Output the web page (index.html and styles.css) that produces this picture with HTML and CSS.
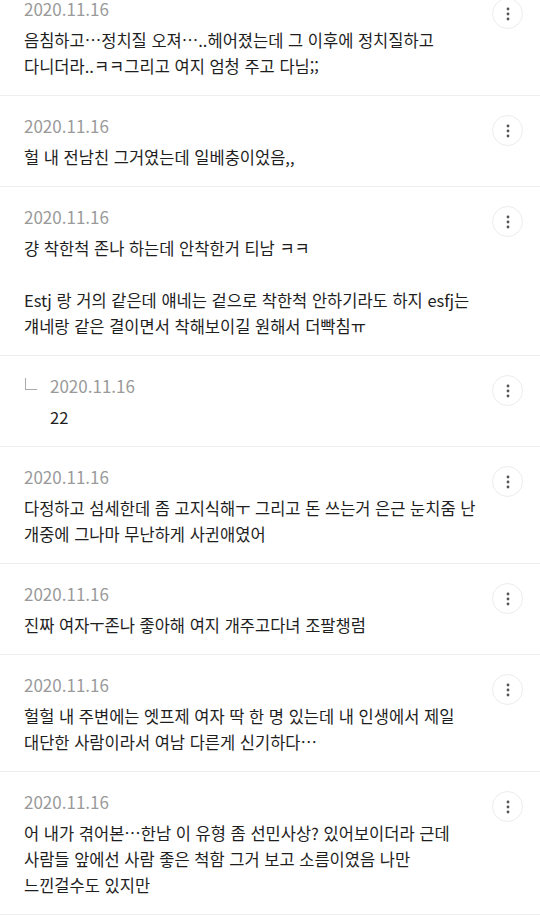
FILE: index.html
```html
<!DOCTYPE html>
<html lang="ko">
<head>
<meta charset="utf-8">
<title>댓글</title>
<link rel="stylesheet" href="styles.css">
</head>
<body>
<ul class="comments">
  <li class="comment">
    <div class="date">2020.11.16</div>
    <button class="more" aria-label="더보기"><svg width="4" height="14" viewBox="0 0 4 14"><circle cx="2" cy="2" r="1.4"/><circle cx="2" cy="7" r="1.4"/><circle cx="2" cy="12" r="1.4"/></svg></button>
    <p class="text">음침하고…정치질 오져…..헤어졌는데 그 이후에 정치질하고 다니더라..ㅋㅋ그리고 여지 엄청 주고 다님;;</p>
  </li>
  <li class="comment">
    <div class="date">2020.11.16</div>
    <button class="more" aria-label="더보기"><svg width="4" height="14" viewBox="0 0 4 14"><circle cx="2" cy="2" r="1.4"/><circle cx="2" cy="7" r="1.4"/><circle cx="2" cy="12" r="1.4"/></svg></button>
    <p class="text">헐 내 전남친 그거였는데 일베충이었음,,</p>
  </li>
  <li class="comment">
    <div class="date">2020.11.16</div>
    <button class="more" aria-label="더보기"><svg width="4" height="14" viewBox="0 0 4 14"><circle cx="2" cy="2" r="1.4"/><circle cx="2" cy="7" r="1.4"/><circle cx="2" cy="12" r="1.4"/></svg></button>
    <p class="text">걍 착한척 존나 하는데 안착한거 티남 ㅋㅋ<br><br>Estj 랑 거의 같은데 얘네는 겉으로 착한척 안하기라도 하지 esfj는 걔네랑 같은 결이면서 착해보이길 원해서 더빡침ㅠ</p>
  </li>
  <li class="comment reply">
    <span class="reply-mark"></span>
    <div class="date">2020.11.16</div>
    <button class="more" aria-label="더보기"><svg width="4" height="14" viewBox="0 0 4 14"><circle cx="2" cy="2" r="1.4"/><circle cx="2" cy="7" r="1.4"/><circle cx="2" cy="12" r="1.4"/></svg></button>
    <p class="text">22</p>
  </li>
  <li class="comment">
    <div class="date">2020.11.16</div>
    <button class="more" aria-label="더보기"><svg width="4" height="14" viewBox="0 0 4 14"><circle cx="2" cy="2" r="1.4"/><circle cx="2" cy="7" r="1.4"/><circle cx="2" cy="12" r="1.4"/></svg></button>
    <p class="text">다정하고 섬세한데 좀 고지식해ㅜ 그리고 돈 쓰는거 은근 눈치줌 난 개중에 그나마 무난하게 사귄애였어</p>
  </li>
  <li class="comment">
    <div class="date">2020.11.16</div>
    <button class="more" aria-label="더보기"><svg width="4" height="14" viewBox="0 0 4 14"><circle cx="2" cy="2" r="1.4"/><circle cx="2" cy="7" r="1.4"/><circle cx="2" cy="12" r="1.4"/></svg></button>
    <p class="text">진짜 여자ㅜ존나 좋아해 여지 개주고다녀 조팔챙럼</p>
  </li>
  <li class="comment">
    <div class="date">2020.11.16</div>
    <button class="more" aria-label="더보기"><svg width="4" height="14" viewBox="0 0 4 14"><circle cx="2" cy="2" r="1.4"/><circle cx="2" cy="7" r="1.4"/><circle cx="2" cy="12" r="1.4"/></svg></button>
    <p class="text">헐헐 내 주변에는 엣프제 여자 딱 한 명 있는데 내 인생에서 제일 대단한 사람이라서 여남 다른게 신기하다…</p>
  </li>
  <li class="comment">
    <div class="date">2020.11.16</div>
    <button class="more" aria-label="더보기"><svg width="4" height="14" viewBox="0 0 4 14"><circle cx="2" cy="2" r="1.4"/><circle cx="2" cy="7" r="1.4"/><circle cx="2" cy="12" r="1.4"/></svg></button>
    <p class="text">어 내가 겪어본…한남 이 유형 좀 선민사상? 있어보이더라 근데 사람들 앞에선 사람 좋은 척함 그거 보고 소름이였음 나만 느낀걸수도 있지만</p>
  </li>
</ul>
</body>
</html>
```
FILE: styles.css
```css
html, body {
  margin: 0;
  padding: 0;
  background: #fff;
  overflow: hidden;
}

body {
  font-family: "Noto Sans CJK KR", "Noto Sans", sans-serif;
  color: #1e1e1e;
}

.comments {
  list-style: none;
  margin: -21px 0 0;
  padding: 0;
}

.comment {
  display: grid;
  grid-template-columns: 1fr auto;
  align-items: start;
  padding: 18px 17px 16px 24px;
  border-bottom: 1px solid #eeeeee;
}

.date {
  grid-column: 1;
  grid-row: 1;
  font-size: 17px;
  line-height: 24px;
  color: #9a9a9a;
}

.more {
  grid-column: 2;
  grid-row: 1;
  width: 31px;
  height: 31px;
  margin: 1px 0 -8px;
  padding: 0;
  border: 1px solid #ececec;
  border-radius: 50%;
  background: #fff;
  display: flex;
  align-items: center;
  justify-content: center;
}

.more svg {
  fill: #555;
  display: block;
}

.text {
  grid-column: 1 / -1;
  grid-row: 2;
  margin: 6px 36px 0 0;
  font-size: 16.5px;
  line-height: 26px;
  color: #1e1e1e;
  word-break: keep-all;
}

.comment.reply {
  grid-template-columns: auto 1fr auto;
}

.comment.reply .date {
  grid-column: 2;
}

.comment.reply .more {
  grid-column: 3;
}

.comment.reply .text {
  grid-column: 2 / -1;
}

.reply-mark {
  grid-column: 1;
  grid-row: 1;
  width: 11px;
  height: 11px;
  margin: 4px 13px 0 1px;
  border-left: 1px solid #aaa;
  border-bottom: 1px solid #aaa;
}
```
